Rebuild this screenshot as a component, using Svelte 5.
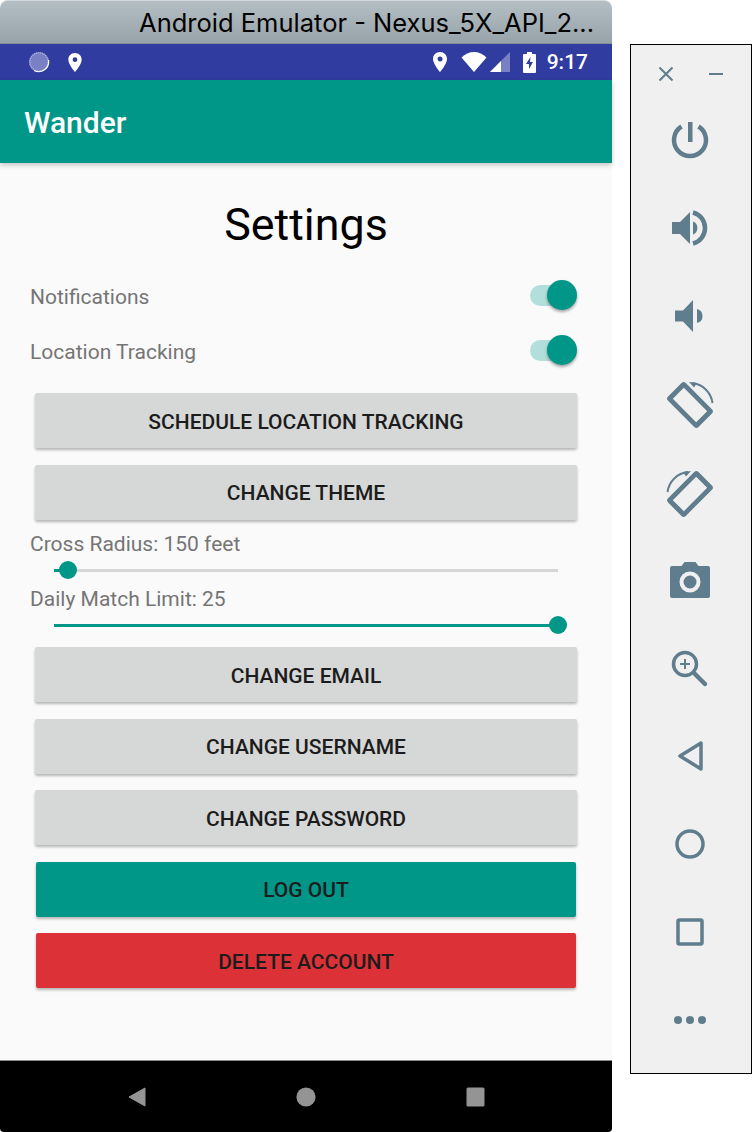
<script>
  const topButtons = ['SCHEDULE LOCATION TRACKING', 'CHANGE THEME'];
  const accountButtons = ['CHANGE EMAIL', 'CHANGE USERNAME', 'CHANGE PASSWORD'];
</script>

<div class="screen">
  <div class="phone">
    <header class="titlebar"><span>Android Emulator - Nexus_5X_API_2...</span></header>

    <div class="status">
      <svg class="spinner" viewBox="0 0 24 24" width="24" height="24">
        <circle cx="12" cy="12" r="10" fill="#7a80c4" />
        <circle cx="12" cy="12" r="9.200" fill="none" stroke="#b4b8e0" stroke-width="1.400" stroke-dasharray="1 1" />
        <path d="M21.500 10A10 10 0 0 1 7 20.500" fill="none" stroke="#fff" stroke-width="1.200" />
      </svg>
      <svg class="pin-left" viewBox="0 0 14 20" width="14" height="19">
        <path fill="#fff" fill-rule="evenodd" d="M7 0C3 0 0 3 0 7c0 5 7 13 7 13s7-8 7-13c0-4-3-7-7-7zm0 4.500a2.500 2.500 0 1 1 0 5 2.500 2.500 0 0 1 0-5z" />
      </svg>
      <div class="spacer"></div>
      <svg viewBox="0 0 14 20" width="14" height="20">
        <path fill="#fff" fill-rule="evenodd" d="M7 0C3 0 0 3 0 7c0 5 7 13 7 13s7-8 7-13c0-4-3-7-7-7zm0 4.500a2.500 2.500 0 1 1 0 5 2.500 2.500 0 0 1 0-5z" />
      </svg>
      <svg class="wifi" viewBox="0 0 26 20" width="26" height="20">
        <path fill="#fff" d="M13 20L0.500 5.500C4 2 8.300 0 13 0s9 2 12.500 5.500z" />
      </svg>
      <svg class="cell" viewBox="0 0 20 20" width="20" height="20">
        <path fill="#7a80c4" d="M20 0V20H0z" />
        <path fill="#fff" d="M11 9V20H0z" />
      </svg>
      <svg class="battery" viewBox="0 0 13 21" width="13" height="21">
        <path fill="#fff" fill-rule="evenodd" d="M4 0h5v2h3a1 1 0 0 1 1 1v17a1 1 0 0 1-1 1H1a1 1 0 0 1-1-1V3a1 1 0 0 1 1-1h3zM7.500 5L3 12h3v5l4-7H7z" />
      </svg>
      <span class="time">9:17</span>
    </div>

    <div class="appbar"><span>Wander</span></div>

    <main class="content">
      <h1>Settings</h1>

      <div class="row">
        <span class="label">Notifications</span>
        <span class="switch"><span class="track"></span><span class="thumb"></span></span>
      </div>
      <div class="row">
        <span class="label">Location Tracking</span>
        <span class="switch"><span class="track"></span><span class="thumb"></span></span>
      </div>

      <div class="stack first">
        {#each topButtons as b}
          <button>{b}</button>
        {/each}
      </div>

      <div class="field first-field">
        <span class="label">Cross Radius: 150 feet</span>
        <div class="slider">
          <div class="rail"><div class="fill near"></div></div>
          <span class="knob low"></span>
        </div>
      </div>
      <div class="field">
        <span class="label">Daily Match Limit: 25</span>
        <div class="slider">
          <div class="rail"><div class="fill full"></div></div>
          <span class="knob high"></span>
        </div>
      </div>

      <div class="stack second">
        {#each accountButtons as b}
          <button>{b}</button>
        {/each}
        <button class="teal">LOG OUT</button>
        <button class="red">DELETE ACCOUNT</button>
      </div>
    </main>

    <nav class="navbar">
      <svg viewBox="0 0 18 20" width="18" height="20"><path fill="#949494" stroke="#949494" stroke-width="1" stroke-linejoin="round" d="M17 1V19L1 10z" /></svg>
      <svg viewBox="0 0 20 20" width="20" height="20"><circle cx="10" cy="10" r="9.600" fill="#949494" /></svg>
      <svg viewBox="0 0 20 20" width="20" height="20"><rect x="1.500" y="0.500" width="18" height="19" rx="1.500" fill="#949494" /></svg>
    </nav>
  </div>

  <aside class="panel">
    <div class="winctl">
      <svg viewBox="0 0 16 16" width="16" height="16"><path d="M1.500 1.500L14.500 14.500M14.500 1.500L1.500 14.500" stroke="#5f7d8c" stroke-width="2" fill="none" /></svg>
      <svg viewBox="0 0 16 16" width="16" height="16"><path d="M1 8H15" stroke="#5f7d8c" stroke-width="2" fill="none" /></svg>
    </div>

    <div class="tools">
      <svg viewBox="0 0 48 48"><path class="ln" stroke-width="4.500" d="M15.500 10.500A16 16 0 1 0 32.500 10.500" /><rect class="fl" x="22" y="6" width="4.500" height="20" /></svg>

      <svg viewBox="0 0 48 48"><path class="fl" d="M6 18H14L24 8V40L14 30H6z" /><path class="fl" d="M27 17.500A7 7 0 0 1 27 30.500z" /><path class="ln" stroke-width="4.500" d="M27 8.500A16 16 0 0 1 27 39.500" /></svg>

      <svg viewBox="0 0 48 48"><path class="fl" d="M9 18.500H17L27 8V40L17 29.500H9z" /><path class="fl" d="M31 17A7.200 7.200 0 0 1 31 31z" /></svg>

      <svg viewBox="0 0 48 48">
        <path class="fl" fill-rule="evenodd" transform="rotate(45 24 25)" d="M5.500 12.500H42.500a3 3 0 0 1 3 3V34.500a3 3 0 0 1-3 3H5.500a3 3 0 0 1-3-3V15.500a3 3 0 0 1 3-3zM7.500 17.200V32.800H40.500V17.200z" />
        <path class="ln" stroke-width="2" d="M26 3A23 23 0 0 1 46.500 23" />
        <path class="fl" d="M23 2L31 3L28 7.500z" />
      </svg>

      <svg viewBox="0 0 48 48">
        <g transform="matrix(-1 0 0 1 48 1)">
          <path class="fl" fill-rule="evenodd" transform="rotate(45 24 25)" d="M5.500 12.500H42.500a3 3 0 0 1 3 3V34.500a3 3 0 0 1-3 3H5.500a3 3 0 0 1-3-3V15.500a3 3 0 0 1 3-3zM7.500 17.200V32.800H40.500V17.200z" />
          <path class="ln" stroke-width="2" d="M26 3A23 23 0 0 1 46.500 23" />
          <path class="fl" d="M23 2L31 3L28 7.500z" />
        </g>
      </svg>

      <svg viewBox="0 0 48 48">
        <path class="fl" d="M18.500 6H29.500L32.500 10H42a2 2 0 0 1 2 2V40a2 2 0 0 1-2 2H6a2 2 0 0 1-2-2V12a2 2 0 0 1 2-2H15.500z" />
        <circle cx="24" cy="26" r="10.500" fill="#f0f0f0" />
        <circle cx="24" cy="26" r="6.500" class="fl" />
      </svg>

      <svg viewBox="0 0 48 48">
        <circle cx="19" cy="20" r="11.500" class="ln" stroke-width="3.500" />
        <path class="ln" stroke-width="2" d="M14 20H24M19 15V25" />
        <path class="ln" stroke-width="4.500" stroke-linecap="round" d="M29 30L39 40" />
      </svg>

      <svg viewBox="0 0 48 48"><path class="ln" stroke-width="3.500" stroke-linejoin="round" d="M14 24L35 11V37z" /></svg>

      <svg viewBox="0 0 48 48"><circle cx="24" cy="24" r="13" class="ln" stroke-width="3.500" /></svg>

      <svg viewBox="0 0 48 48"><rect x="12" y="12" width="24" height="24" rx="1.500" class="ln" stroke-width="3.500" /></svg>

      <svg viewBox="0 0 48 48"><circle cx="12" cy="24" r="4" class="fl" /><circle cx="24" cy="24" r="4" class="fl" /><circle cx="36" cy="24" r="4" class="fl" /></svg>
    </div>
  </aside>
</div>

<style>
  :global(body) {
    margin: 0;
    background: #fff;
  }

  .screen {
    display: flex;
    align-items: flex-start;
    gap: 18px;
    width: 752px;
    height: 1132px;
    overflow: hidden;
    font-family: Roboto, "Liberation Sans", sans-serif;
  }

  .phone {
    display: flex;
    flex-direction: column;
    flex: none;
    width: 612px;
    height: 1132px;
  }

  .titlebar {
    display: flex;
    align-items: center;
    justify-content: flex-end;
    flex: none;
    box-sizing: border-box;
    height: 44px;
    padding: 0 18px 0 0;
    background: linear-gradient(#b3bfc5, #98a3a9);
    border-top: 1px solid #d2d8db;
    border-bottom: 1px solid #868f95;
    border-radius: 8px 8px 0 0;
    font-family: Inter, "Liberation Sans", sans-serif;
    font-size: 25.500px;
    color: #000;
    white-space: nowrap;
  }

  .status {
    display: flex;
    align-items: center;
    flex: none;
    height: 36px;
    padding: 0 24px 0 27px;
    background: #303c9f;
    color: #fff;
  }

  .spinner { margin-right: 17px; }
  .spacer { flex: 1; }
  .wifi { margin-left: 14px; }
  .cell { margin-left: 3px; }
  .battery { margin-left: 13px; }

  .time {
    margin-left: 11px;
    font-size: 21px;
    font-weight: 500;
  }

  .appbar {
    position: relative;
    z-index: 1;
    display: flex;
    align-items: center;
    flex: none;
    box-sizing: border-box;
    height: 83px;
    padding: 1px 0 0 24px;
    background: #009688;
    box-shadow: 0 2px 5px rgba(0, 0, 0, 0.22);
    color: #fff;
    font-size: 30px;
    font-weight: 500;
  }

  .content {
    display: flex;
    flex-direction: column;
    flex: 1;
    min-height: 0;
    background: #fafafa;
  }

  h1 {
    margin: 0;
    height: 105px;
    padding-top: 33px;
    box-sizing: border-box;
    text-align: center;
    font-size: 44.800px;
    line-height: 58px;
    font-weight: 400;
    color: #000;
  }

  .row {
    display: flex;
    align-items: center;
    justify-content: space-between;
    height: 55px;
    padding: 0 35px 0 30px;
  }

  .label {
    padding-top: 1px;
    margin-bottom: -1px;
    font-size: 21px;
    line-height: 24px;
    color: #757575;
  }

  .switch {
    position: relative;
    width: 47px;
    height: 30px;
    margin-bottom: 2px;
  }

  .track {
    position: absolute;
    top: 5px;
    left: 0;
    width: 46px;
    height: 21px;
    border-radius: 11px;
    background: #b2dfdb;
  }

  .thumb {
    position: absolute;
    top: 0;
    right: 0;
    width: 30px;
    height: 30px;
    border-radius: 50%;
    background: #009688;
    box-shadow: 0 2px 3px rgba(0, 0, 0, 0.35);
  }

  .stack {
    display: flex;
    flex-direction: column;
    gap: 16.500px;
    padding: 0 36px;
  }

  .stack.first { margin-top: 15px; }
  .stack.second { margin-top: 7px; }

  button {
    height: 55px;
    margin: 0 -1px;
    padding: 2px 0 0;
    border: 0;
    border-radius: 2px;
    background: #d6d7d7;
    box-shadow: 0 2px 3px rgba(0, 0, 0, 0.28);
    font-family: inherit;
    font-size: 21px;
    font-weight: 500;
    color: #1c1c1c;
  }

  .teal { background: #009688; margin: 0; }
  .red { background: #dc3237; margin: 0; }

  .field {
    display: flex;
    flex-direction: column;
    padding-left: 30px;
  }

  .first-field { margin-top: 11.500px; }
  .field + .field { margin-top: 1px; }

  .slider {
    position: relative;
    height: 30px;
    margin-left: 24px;
    width: 504px;
  }

  .rail {
    position: absolute;
    top: 14px;
    left: 0;
    right: 0;
    height: 3px;
    background: #d6d6d6;
  }

  .fill {
    height: 100%;
    background: #009688;
  }

  .near { width: 14px; }
  .full { width: 100%; }

  .knob {
    position: absolute;
    top: 6px;
    width: 18px;
    height: 18px;
    border-radius: 50%;
    background: #009688;
  }

  .low { left: 5px; }
  .high { right: -9px; }

  .navbar {
    display: flex;
    align-items: center;
    justify-content: space-between;
    flex: none;
    box-sizing: border-box;
    height: 72px;
    padding: 0 127px 0 128px;
    background: #000;
    border-top: 1px solid #8a8a8a;
    border-radius: 0 0 4px 4px;
  }

  .panel {
    flex: none;
    box-sizing: border-box;
    width: 122px;
    height: 1030px;
    margin-top: 44px;
    background: #f0f0f0;
    border: 1px solid #000;
  }

  .winctl {
    display: flex;
    justify-content: space-between;
    height: 16px;
    padding: 21px 27px 0 27px;
  }

  .tools {
    display: flex;
    flex-direction: column;
    align-items: center;
    margin-top: 34px;
    padding-right: 2px;
    gap: 40px;
  }

  .tools svg {
    display: block;
    width: 48px;
    height: 48px;
    overflow: visible;
  }

  .ln {
    fill: none;
    stroke: #5f7d8c;
  }

  .fl {
    fill: #5f7d8c;
  }
</style>
